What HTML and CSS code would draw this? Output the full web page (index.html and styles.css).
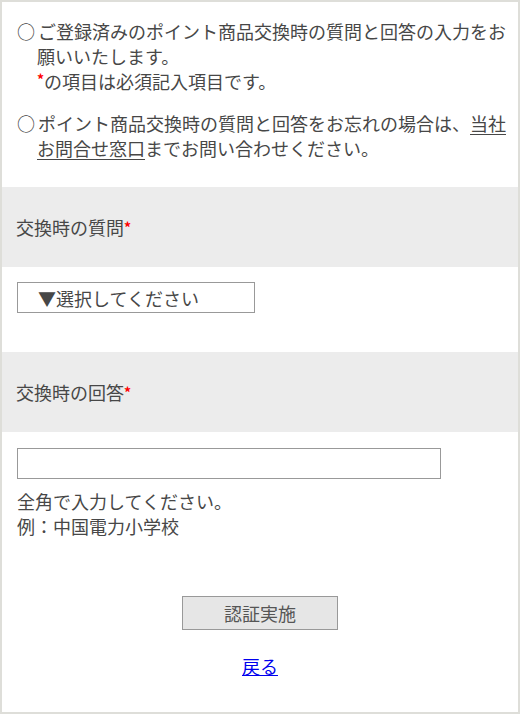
FILE: index.html
```html
<!DOCTYPE html>
<html lang="ja">
<head>
  <meta charset="UTF-8">
  <meta name="viewport" content="width=device-width, initial-scale=1.0">
  <title>交換時の質問と回答</title>
  <link rel="stylesheet" href="styles.css">
</head>
<body>

  <div class="frame">

    <ul class="notes">
      <li><span class="mark">○</span>ご登録済みのポイント商品交換時の質問と回答の入力をお願いいたします。<br><span class="req">*</span>の項目は必須記入項目です。</li>
      <li><span class="mark">○</span>ポイント商品交換時の質問と回答をお忘れの場合は、<a href="#" class="inline-link">当社お問合せ窓口</a>までお問い合わせください。</li>
    </ul>

    <div class="section-head">交換時の質問<span class="req">*</span></div>
    <div class="section-body body-select">
      <select class="question-select">
        <option>▼選択してください</option>
      </select>
    </div>

    <div class="section-head">交換時の回答<span class="req">*</span></div>
    <div class="section-body body-answer">
      <input type="text" class="answer-input">
      <p class="hint">全角で入力してください。<br>例：中国電力小学校</p>
    </div>

    <div class="actions">
      <button class="submit-btn">認証実施</button>
      <a href="#" class="back-link">戻る</a>
    </div>

  </div>

</body>
</html>
```

FILE: styles.css
```css
* {
  box-sizing: border-box;
}

body {
  margin: 0;
  font-family: "Noto Sans CJK JP", "Noto Sans", sans-serif;
  font-size: 18px;
  color: #474747;
  background: #fff;
}

.frame {
  width: 520px;
  height: 714px;
  border: 2px solid #deded9;
}

/* Notes at the top */
.notes {
  list-style: none;
  margin: 0;
  padding: 17px 12px 0 15px;
  line-height: 25px;
}

.notes li {
  padding-left: 20px;
  text-indent: -20px;
  margin-bottom: 17px;
}

.notes li:last-child {
  margin-bottom: 0;
}

.mark {
  display: inline-block;
  width: 21px;
  text-indent: 0;
}

.inline-link {
  color: #474747;
  text-decoration: underline;
  text-underline-offset: 3px;
}

.req {
  color: #f00;
  font-size: 14px;
  font-weight: bold;
  vertical-align: 4px;
  line-height: 0;
}

/* Form sections */
.section-head {
  display: flex;
  align-items: center;
  height: 80px;
  padding-left: 14px;
  background: #ececec;
}

.notes + .section-head {
  margin-top: 26px;
}

.section-body {
  padding: 15px 15px 0 15px;
}

.body-select {
  height: 85px;
}

.body-answer {
  padding-top: 16px;
  height: 164px;
}

.question-select {
  appearance: none;
  -webkit-appearance: none;
  display: block;
  width: 238px;
  height: 31px;
  padding: 0 0 0 20px;
  border: 1px solid #999;
  border-radius: 0;
  background: #fff;
  font-family: inherit;
  font-size: 18px;
  color: #474747;
  outline: none;
}

.answer-input {
  display: block;
  width: 424px;
  height: 31px;
  border: 1px solid #999;
  border-radius: 0;
  outline: none;
  font-family: inherit;
  font-size: 18px;
}

.hint {
  margin: 10px 0 0 0;
  line-height: 25px;
}

/* Buttons */
.actions {
  display: flex;
  flex-direction: column;
  align-items: center;
}

.submit-btn {
  width: 156px;
  height: 34px;
  border: 1px solid #999;
  background: #e6e6e6;
  font-family: inherit;
  font-size: 18px;
  color: #555;
  cursor: pointer;
}

.back-link {
  margin-top: 24px;
  color: #00e;
  text-decoration: underline;
  line-height: 25px;
}
```
